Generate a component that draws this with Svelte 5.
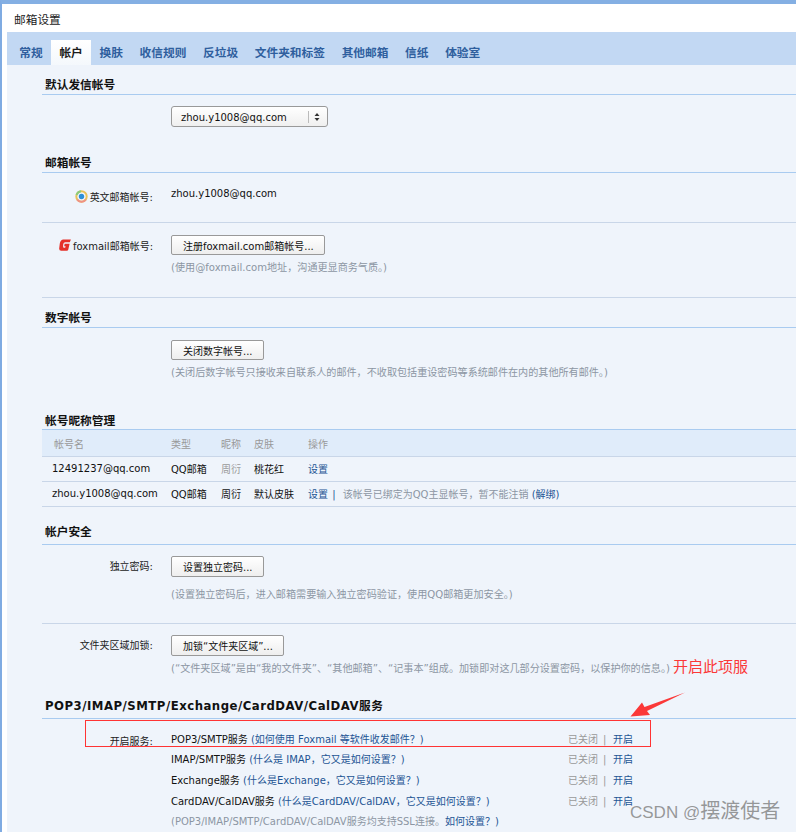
<script>
	const tabs = ['常规', '帐户', '换肤', '收信规则', '反垃圾', '文件夹和标签', '其他邮箱', '信纸', '体验室'];
	const accounts = [
		{ name: '12491237@qq.com', type: 'QQ邮箱', nick: '周衍', muted: true, skin: '桃花红' },
		{ name: 'zhou.y1008@qq.com', type: 'QQ邮箱', nick: '周衍', muted: false, skin: '默认皮肤', bound: true }
	];
	const services = [
		{ name: 'POP3/SMTP服务', help: '(如何使用 Foxmail 等软件收发邮件？)' },
		{ name: 'IMAP/SMTP服务', help: '(什么是 IMAP，它又是如何设置？)' },
		{ name: 'Exchange服务', help: '(什么是Exchange，它又是如何设置？)' },
		{ name: 'CardDAV/CalDAV服务', help: '(什么是CardDAV/CalDAV，它又是如何设置？)' }
	];
</script>

<div class="window">
	<div class="title">邮箱设置</div>
	<nav class="tabs">
		{#each tabs as tab, i}
			<span class="tab" class:active={i === 1}>{tab}</span>
		{/each}
	</nav>

	<main class="content">
		<h2 class="first">默认发信帐号</h2>
		<div class="form-row plain">
			<span></span>
			<div class="select">
				<span class="select-value">zhou.y1008@qq.com</span>
				<svg width="18" height="14" viewBox="0 0 18 14">
					<path d="M0.5 1V13" stroke="#bbb" />
					<path d="M6.5 6L9 3L11.5 6ZM6.5 8L9 11L11.5 8Z" fill="#333" />
				</svg>
			</div>
		</div>

		<h2 class="after-select">邮箱帐号</h2>
		<div class="form-row text-row">
			<span class="label offset">
				<svg class="icon" width="13" height="13" viewBox="0 0 13 13">
					<circle cx="6.5" cy="6.5" r="5.2" fill="none" stroke="#e8c25a" stroke-width="2" />
					<path d="M2.2 9.5A5.2 5.2 0 0 0 10.8 9.5" fill="none" stroke="#ef8f86" stroke-width="2" />
					<path d="M1.6 5A5.2 5.2 0 0 1 6 1.3" fill="none" stroke="#8ccb7c" stroke-width="2" />
					<circle cx="6.5" cy="6.5" r="2.7" fill="#2b8fd8" />
				</svg>
				英文邮箱帐号:
			</span>
			<span class="value">zhou.y1008@qq.com</span>
		</div>
		<div class="form-row fox">
			<span class="label">
				<svg class="icon" width="12" height="12" viewBox="0 0 12 12">
					<path d="M4.4 0.4H11.9L10.8 3.2H6.2Q4.6 3.2 4.3 5L4.1 6.8Q4 8.8 5 8.8H6.2L6.6 7.2H5.2L5.6 4.8H10.6L9.3 10.6Q9 11.8 7.8 11.8H2.2Q-0.1 11.8 0.2 9.2L0.8 4.6Q1.3 0.6 4.4 0.4Z" fill="#e5302a" />
				</svg>
				foxmail邮箱帐号:
			</span>
			<div>
				<button class="btn short">注册foxmail.com邮箱帐号...</button>
				<p class="note">(使用@foxmail.com地址，沟通更显商务气质。)</p>
			</div>
		</div>

		<h2 class="tight">数字帐号</h2>
		<div class="form-row plain">
			<span></span>
			<div>
				<button class="btn short">关闭数字帐号...</button>
				<p class="note">(关闭后数字帐号只接收来自联系人的邮件，不收取包括重设密码等系统邮件在内的其他所有邮件。)</p>
			</div>
		</div>

		<h2 class="after-digit">帐号昵称管理</h2>
		<table>
			<thead>
				<tr>
					<th class="col-name">帐号名</th>
					<th class="col-type">类型</th>
					<th class="col-nick">昵称</th>
					<th class="col-skin">皮肤</th>
					<th>操作</th>
				</tr>
			</thead>
			<tbody>
				{#each accounts as a}
					<tr>
						<td class="col-name">{a.name}</td>
						<td>{a.type}</td>
						<td class:muted={a.muted}>{a.nick}</td>
						<td>{a.skin}</td>
						<td>
							<span class="link">设置</span>
							{#if a.bound}
								<span class="link bar">|</span>
								<span class="bound">该帐号已绑定为QQ主显帐号，暂不能注销</span>
								<span class="link">(解绑)</span>
							{/if}
						</td>
					</tr>
				{/each}
			</tbody>
		</table>

		<h2 class="after-table">帐户安全</h2>
		<div class="form-row tall">
			<span class="label">独立密码:</span>
			<div>
				<button class="btn">设置独立密码...</button>
				<p class="note wide">(设置独立密码后，进入邮箱需要输入独立密码验证，使用QQ邮箱更加安全。)</p>
			</div>
		</div>
		<div class="form-row tall plain">
			<span class="label">文件夹区域加锁:</span>
			<div>
				<button class="btn">加锁“文件夹区域”...</button>
				<p class="note">(“文件夹区域”是由“我的文件夹”、“其他邮箱”、“记事本”组成。加锁即对这几部分设置密码，以保护你的信息。)</p>
			</div>
		</div>

		<h2 class="after-lock">POP3/IMAP/SMTP/Exchange/CardDAV/CalDAV服务</h2>
		<div class="form-row plain services">
			<span class="label offset">开启服务:</span>
			<div>
				{#each services as s}
					<div class="service">
						<span class="service-name">{s.name} <span class="link">{s.help}</span></span>
						<span class="status">已关闭</span>
						<span class="status sep">|</span>
						<span class="link">开启</span>
					</div>
				{/each}
				<div class="service note-line">(POP3/IMAP/SMTP/CardDAV/CalDAV服务均支持SSL连接。<span class="link">如何设置？)</span></div>
			</div>
		</div>
	</main>

	<!-- annotations drawn on top of the screenshot -->
	<div class="mark-box"></div>
	<div class="mark-text">开启此项服</div>
	<svg class="mark-arrow" width="56" height="30" viewBox="0 0 56 30">
		<path d="M55 0.5L17 19L20 23L0.5 24.5L12 10.5L14.5 15Z" fill="#fb3838" />
	</svg>
	<div class="watermark"><span class="wm-latin">CSDN @</span>摆渡使者</div>
</div>

<style>
	:global(body) {
		margin: 0;
		background: #fff;
	}
	.window {
		position: relative;
		box-sizing: border-box;
		height: 832px;
		overflow: hidden;
		padding-left: 5px;
		background: #fff;
		border-top: 4px solid #84afe3;
		border-left: 2px solid #7fabe2;
		font-family: "DejaVu Sans", "Noto Sans CJK SC", sans-serif;
		font-size: 10px;
		color: #111;
	}
	.title {
		height: 28px;
		margin-left: 7px;
		line-height: 33px;
		font-size: 11.7px;
		color: #222;
	}
	.tabs {
		display: flex;
		align-items: flex-end;
		height: 33px;
		padding-left: 4px;
		background: #c2d8f3;
	}
	.tab {
		height: 25px;
		padding: 0 8.35px;
		line-height: 27px;
		font-size: 11.7px;
		font-weight: 700;
		color: #2f5f9e;
	}
	.tab.active {
		background: linear-gradient(#fff, #f4f8fc);
		color: #1b1b1b;
	}
	.content {
		height: 800px;
		padding: 7px 0 0 35px;
		background: #eff4fb;
	}
	h2 {
		box-sizing: content-box;
		height: 22px;
		margin: 0;
		padding-left: 3px;
		line-height: 26px;
		font-size: 11.7px;
		font-weight: 700;
		color: #111;
		border-bottom: 1px solid #a9cbf0;
	}
	.after-select {
		margin-top: 23px;
	}
	.tight {
		margin-top: 7px;
	}
	.after-digit {
		margin-top: 26px;
		line-height: 28px;
	}
	.after-table {
		margin-top: 15px;
		line-height: 20px;
	}
	.after-lock {
		margin-top: 19px;
		line-height: 20px;
		letter-spacing: 0.5px;
	}
	.form-row {
		display: grid;
		grid-template-columns: 111px 1fr;
		column-gap: 18px;
		padding: 12px 0 22px;
		border-bottom: 1px solid #c9d6e8;
	}
	.form-row.plain {
		padding-bottom: 0;
		border-bottom: 0;
	}
	.text-row {
		height: 16px;
		padding-bottom: 21px;
	}
	.fox {
		padding-bottom: 21px;
	}
	.tall {
		padding-top: 11px;
		padding-bottom: 20px;
	}
	.services {
		padding-top: 11px;
	}
	.label {
		display: flex;
		align-items: center;
		justify-content: flex-end;
		height: 20px;
		white-space: nowrap;
		color: #222;
	}
	.label.offset {
		height: 16px;
		padding-top: 3px;
	}
	.services .label.offset {
		height: 21px;
		padding-top: 0;
	}
	.icon {
		flex: none;
		margin-right: 2px;
	}
	.value {
		line-height: 18px;
		font-size: 10px;
	}
	.select {
		display: flex;
		align-items: center;
		justify-content: space-between;
		box-sizing: border-box;
		width: 157px;
		height: 21px;
		margin-top: -1px;
		padding: 1px 1px 0 9px;
		background: linear-gradient(#fff, #efefef);
		border: 1px solid #999;
		border-radius: 3px;
	}
	.btn {
		display: block;
		box-sizing: border-box;
		height: 21px;
		padding: 0 10px 0 11px;
		background: linear-gradient(#fff, #eee);
		border: 1px solid #999;
		border-radius: 2px;
		font: inherit;
		color: #111;
		white-space: nowrap;
	}
	.btn.short {
		height: 20px;
	}
	.note {
		margin: 5px 0 0;
		line-height: 16px;
		font-size: 10.1px;
		color: #8c96a3;
		white-space: nowrap;
	}
	.note.wide {
		margin-top: 10px;
	}
	table {
		width: 100%;
		border-collapse: collapse;
		table-layout: fixed;
	}
	th {
		height: 26px;
		padding: 1px 0 0;
		box-sizing: border-box;
		background: #e0ecfa;
		font-weight: 400;
		text-align: left;
		color: #999;
		border-bottom: 1px solid #c9d6e8;
	}
	td {
		height: 22px;
		padding: 1px 0 1px;
		border-bottom: 1px solid #c9d6e8;
		white-space: nowrap;
	}
	.col-name {
		width: 119px;
		padding-left: 10px;
	}
	th.col-name {
		padding-left: 12px;
		width: 129px;
	}
	.col-type {
		width: 50px;
	}
	.col-nick {
		width: 33px;
	}
	.col-skin {
		width: 54px;
	}
	.muted {
		color: #999;
	}
	.link {
		color: #1e5494;
	}
	.bar {
		margin: 0 4px 0 1px;
	}
	.bound {
		color: #8c96a3;
	}
	.service {
		display: flex;
		height: 20.7px;
		line-height: 20.7px;
		white-space: nowrap;
	}
	.service-name {
		width: 397px;
	}
	.status {
		width: 35px;
		color: #999;
	}
	.status.sep {
		width: 10px;
	}
	.note-line {
		display: block;
		color: #8c96a3;
	}
	.mark-box {
		position: absolute;
		left: 83px;
		top: 716px;
		width: 564px;
		height: 25px;
		border: 1px solid #f33;
	}
	.mark-text {
		position: absolute;
		left: 671px;
		top: 653px;
		font-size: 15px;
		line-height: 20px;
		color: #fb3838;
	}
	.mark-arrow {
		position: absolute;
		left: 628px;
		top: 688px;
	}
	.watermark {
		position: absolute;
		left: 628px;
		top: 794px;
		font-family: "Liberation Sans", "Noto Sans CJK SC", sans-serif;
		font-size: 20px;
		line-height: 26px;
		color: rgba(120, 120, 120, 0.75);
		white-space: nowrap;
	}
	.wm-latin {
		font-size: 17px;
	}
</style>
